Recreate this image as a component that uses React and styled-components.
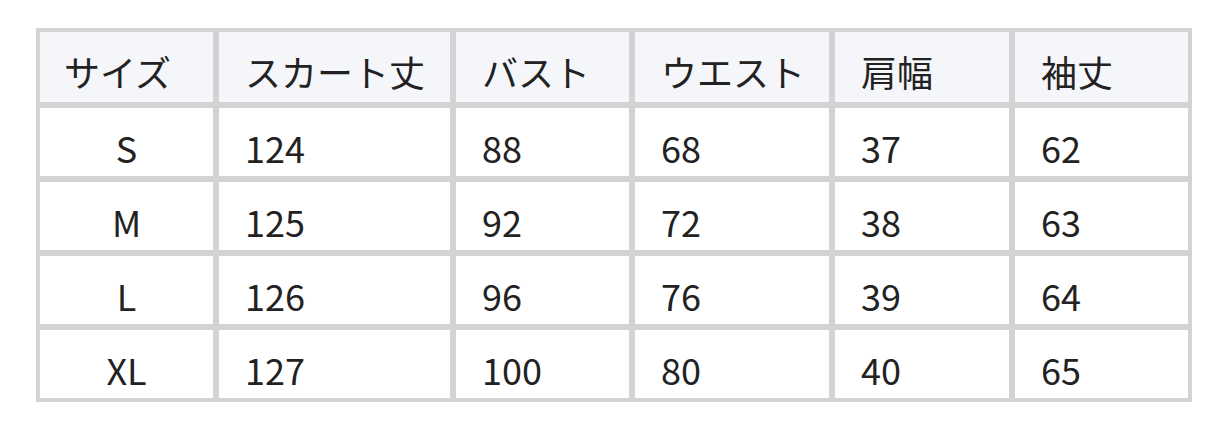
import React from "react";
import styled, { createGlobalStyle } from "styled-components";

const Global = createGlobalStyle`
  html, body { margin: 0; padding: 0; background: #fff; }
  body { font-family: "Noto Sans CJK JP", "Noto Sans", sans-serif; color: #222; }
`;

const Page = styled.div`
  padding: 28px 36px;
`;

const Table = styled.table`
  box-sizing: border-box;
  width: 1156px;
  table-layout: fixed;
  border-collapse: separate;
  border-spacing: 0;
  border: 1px solid #d3d3d3;
  background: #fff;
`;

const HeadCell = styled.th`
  box-sizing: border-box;
  width: ${(p) => p.$w}px;
  height: 76px;
  border: 3px solid #d3d3d3;
  background: #f5f6fa;
  padding: 8px 0 0 ${(p) => p.$pl || 26}px;
  text-align: left;
  font-weight: 400;
  font-size: 36px;
  line-height: 1;
  color: #222;
  vertical-align: middle;
`;

const Cell = styled.td`
  box-sizing: border-box;
  height: 74px;
  border: 3px solid #d3d3d3;
  padding: 10px 0 0 ${(p) => (p.$center ? 0 : 26)}px;
  text-align: ${(p) => (p.$center ? "center" : "left")};
  font-size: 36px;
  line-height: 1;
  color: #222;
  vertical-align: middle;
`;

const columns = [
  { label: "サイズ", w: 179, pl: 24 },
  { label: "スカート丈", w: 237 },
  { label: "バスト", w: 179 },
  { label: "ウエスト", w: 200 },
  { label: "肩幅", w: 180 },
  { label: "袖丈", w: 179 },
];

const rows = [
  ["S", "124", "88", "68", "37", "62"],
  ["M", "125", "92", "72", "38", "63"],
  ["L", "126", "96", "76", "39", "64"],
  ["XL", "127", "100", "80", "40", "65"],
];

export default function App() {
  return (
    <>
      <Global />
      <Page>
        <Table lang="ja">
          <thead>
            <tr>
              {columns.map((c) => (
                <HeadCell key={c.label} $w={c.w} $pl={c.pl}>
                  {c.label}
                </HeadCell>
              ))}
            </tr>
          </thead>
          <tbody>
            {rows.map((r) => (
              <tr key={r[0]}>
                {r.map((v, i) => (
                  <Cell key={i} $center={i === 0}>
                    {v}
                  </Cell>
                ))}
              </tr>
            ))}
          </tbody>
        </Table>
      </Page>
    </>
  );
}
